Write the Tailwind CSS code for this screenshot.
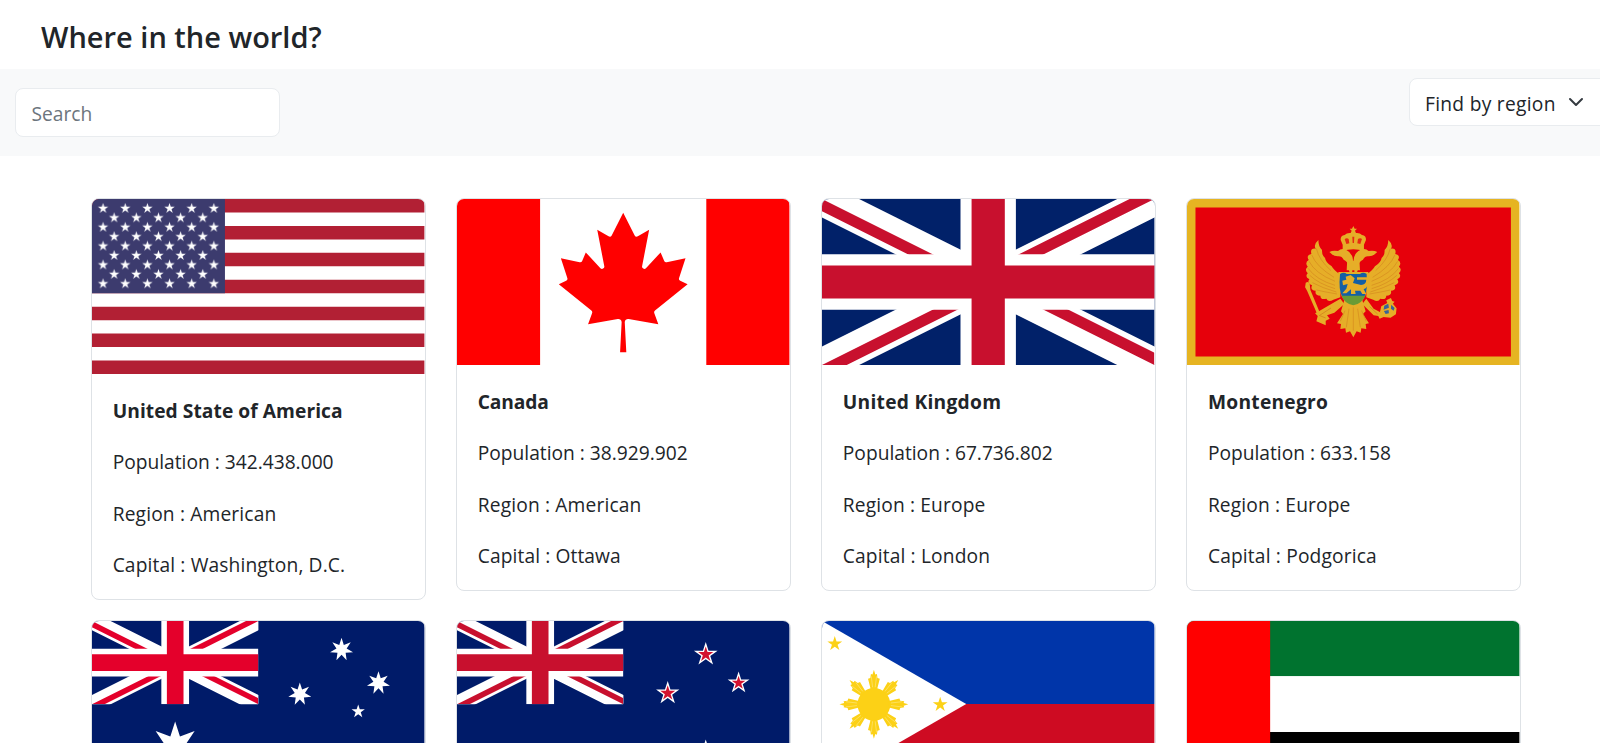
<!DOCTYPE html>
<html lang="en">
<head>
<meta charset="utf-8">
<title>Where in the world?</title>
<script src="https://cdn.jsdelivr.net/npm/@tailwindcss/browser@4"></script>
</head>
<body class="h-[743px] overflow-hidden bg-white font-['Open_Sans','Noto_Sans',sans-serif] text-[19.2px] leading-[30.72px] text-[#212529]">

<svg class="hidden" aria-hidden="true">
  <defs>
    <symbol id="star5" viewBox="-1 -1 2 2" overflow="visible"><path d="M0-1 .225-.309 .951-.309 .363.118 .588.809 0 .382-.588.809-.363.118-.951-.309-.225-.309z"/></symbol>
    <symbol id="star7" viewBox="-1 -1 2 2" overflow="visible"><path d="M0-1 .193-.4 .782-.623 .433-.099 .975.223 .347.277 .434.901 0 .444-.434.901-.347.277-.975.223-.433-.099-.782-.623-.193-.4z"/></symbol>
  </defs>
</svg>

<header class="flex h-[69px] items-center pl-[41px]">
  <h1 class="pt-[4px] text-[29px] font-semibold leading-9">Where in the world?</h1>
</header>

<div class="flex h-[87px] items-start justify-between bg-[#f8f9fa]">
  <div class="mt-[19px] ml-[15px] flex h-[49px] w-[265px] items-center rounded-[8px] border border-[#e9ecef] bg-white pl-[15.5px] pt-[4px] text-[#6c757d]">Search</div>
  <div class="-mr-2 mt-[9px] flex h-[48px] w-[199px] items-center rounded-[8px] border border-[#e9ecef] bg-white pl-[15px] pt-[4px]">
    <span class="w-[143px] whitespace-nowrap tracking-[0.28px]">Find by region</span>
    <svg class="-mt-1 h-[16px] w-[16px]" viewBox="0 0 16 16" fill="none" stroke="#343a40" stroke-width="2" stroke-linecap="round" stroke-linejoin="round"><path d="m2 5 6 6 6-6"/></svg>
  </div>
</div>

<main class="grid grid-cols-[repeat(4,334.4px)] items-start gap-x-[30.7px] gap-y-[20px] pl-[91.2px] pt-[42px]">

  <article class="overflow-hidden rounded-[8px] border border-[#dee2e6]">
    <svg class="block h-[175px] w-full" viewBox="0 0 7410 3900" preserveAspectRatio="none">
      <defs>
        <pattern id="sA" width="494" height="420" patternUnits="userSpaceOnUse"><use href="#star5" x="127" y="90" width="240" height="240" fill="#fff"/></pattern>
        <pattern id="sB" x="247" y="210" width="494" height="420" patternUnits="userSpaceOnUse"><use href="#star5" x="127" y="90" width="240" height="240" fill="#fff"/></pattern>
      </defs>
      <path fill="#fff" d="M0 0h7410v3900H0z"/>
      <path stroke="#b22034" stroke-width="300" d="M0 150h7410M0 750h7410M0 1350h7410M0 1950h7410M0 2550h7410M0 3150h7410M0 3750h7410"/>
      <path fill="#3c3b6e" d="M0 0h2964v2100H0z"/>
      <path fill="url(#sA)" d="M0 0h2964v2100H0z"/>
      <path fill="url(#sB)" d="M247 210h2470v1680H247z"/>
    </svg>
    <div class="flex flex-col gap-[20.48px] px-[20.48px] pt-[22.2px] pb-[18.8px]">
      <h2 class="font-bold tracking-[0.06px]">United State of America</h2>
      <p>Population : 342.438.000</p><p class="tracking-[0.15px]">Region : American</p><p class="tracking-[0.13px]">Capital : Washington, D.C.</p>
    </div>
  </article>

  <article class="overflow-hidden rounded-[8px] border border-[#dee2e6]">
    <svg class="block h-[166px] w-full" viewBox="-4800 -2400 9600 4800" preserveAspectRatio="none">
      <path fill="#fff" d="M-4800-2400h9600v4800h-9600z"/>
      <path fill="red" d="M-4800-2400h2400v4800h-2400zM2400-2400h2400v4800H2400zM-90 2030l45-863a95 95 0 0 0-111-98l-859 151 116-320a65 65 0 0 0-20-73l-941-762 212-99a65 65 0 0 0 34-79l-186-572 542 115a65 65 0 0 0 73-38l105-247 423 454a65 65 0 0 0 111-57l-204-1052 327 189a65 65 0 0 0 91-27l332-652 332 652a65 65 0 0 0 91 27l327-189-204 1052a65 65 0 0 0 111 57l423-454 105 247a65 65 0 0 0 73 38l542-115-186 572a65 65 0 0 0 34 79l212 99-941 762a65 65 0 0 0-20 73l116 320-859-151a95 95 0 0 0-111 98l45 863z"/>
    </svg>
    <div class="flex flex-col gap-[20.48px] px-[20.48px] pt-[22.2px] pb-[18.8px]">
      <h2 class="font-bold tracking-[-0.15px]">Canada</h2>
      <p>Population : 38.929.902</p><p class="tracking-[0.15px]">Region : American</p><p class="tracking-[0.1px]">Capital : Ottawa</p>
    </div>
  </article>

  <article class="overflow-hidden rounded-[8px] border border-[#dee2e6]">
    <svg class="block h-[166px] w-full" viewBox="0 0 60 30" preserveAspectRatio="none">
      <clipPath id="uk"><path d="M30 15h30v15zv15H0zH0V0zV0h30z"/></clipPath>
      <path fill="#012169" d="M0 0h60v30H0z"/>
      <path stroke="#fff" stroke-width="6" d="m0 0 60 30M60 0 0 30"/>
      <path stroke="#c8102e" stroke-width="4" clip-path="url(#uk)" d="m0 0 60 30M60 0 0 30"/>
      <path stroke="#fff" stroke-width="10" d="M30 0v30M0 15h60"/>
      <path stroke="#c8102e" stroke-width="6" d="M30 0v30M0 15h60"/>
    </svg>
    <div class="flex flex-col gap-[20.48px] px-[20.48px] pt-[22.2px] pb-[18.8px]">
      <h2 class="font-bold tracking-[0.27px]">United Kingdom</h2>
      <p>Population : 67.736.802</p><p class="tracking-[0.14px]">Region : Europe</p><p class="tracking-[0.14px]">Capital : London</p>
    </div>
  </article>

  <article class="overflow-hidden rounded-[8px] border border-[#dee2e6]">
    <svg class="block h-[166px] w-full" viewBox="0 0 333 166" preserveAspectRatio="none">
      <path fill="#e6b422" d="M0 0h333v166H0z"/>
      <path fill="#e6000b" d="M8.5 8.5h316v149h-316z"/>
      <g transform="translate(92.3 11) scale(.3333)" fill="#e6ae28">
        <g id="wing">
          <path d="M118 90Q102 104 110 116Q92 114 97 132Q80 136 89 150Q76 158 86 170Q75 178 86 190Q76 200 91 208Q82 220 99 226Q92 240 110 242Q106 257 124 257Q124 271 142 266Q148 278 163 269L184 262L182 192Q165 182 158 169Q140 158 138 144Q128 136 129 120Q118 110 118 90z"/>
          <path d="M219 196Q207 184 209 168Q205 153 194 149Q188 137 176 139Q163 139 151 126Q161 120 177 123Q188 113 202 120Q220 128 222 150Z"/>
          <path fill="none" stroke="#d68c20" stroke-width="2.2" d="M112 116Q120 150 156 182M98 135Q112 170 165 202M90 154Q108 190 168 214M87 175Q112 210 168 226M92 196Q120 222 168 236M100 218Q130 234 172 246M112 240Q138 246 174 252"/>
        </g>
        <use href="#wing" transform="matrix(-1 0 0 1 446 0)"/>
        <path d="M223 48l4 8h7l-6 6 3 7q12-1 18 6 13 2 12 15l-6 14v18q-32-9-64 0v-18l-6-14q-1-13 12-15 6-7 18-6l3-7-6-6h7z"/>
        <path fill="#e6000b" opacity=".75" d="M197 87q7-5 12 0l2 13-9 2zM237 87q7-5 12 0l-5 15-9-2zM220 80h6l-1 19h-4z"/>
        <path d="M205 145q18 14 36 0l2 36h-40zM196 270h54l10 34-8 8 18 28-10 2 2 15-15-2-2 13-12-4-10 18-10-18-12 4-2-13-15 2 2-15-12-2 18-28-6-8z"/>
        <path fill="none" stroke="#d68c20" stroke-width="2.2" d="M223 292v70M210 296l-8 56M236 296l8 56M198 302l-14 32M248 302l14 32"/>
        <path d="M184 266l12 16-30 26-22 8 8 10-12 6v14l-14-6-14-6 4-16-8-8 14-8 18-10zM262 266l-12 16 34 34 14 2 4 8 14-6-6-10-26-14z"/>
        <path d="M80 218q8-6 12 4l2 18 30 72-8 4-32-74-6-10z"/>
        <path fill="none" stroke="#d68c20" stroke-width="3" d="M156 294l-34 22M272 290l24 22M120 316l20 8"/>
        <path d="M336 264l4 9 7 2-5 6 11 14-2 18-16 10-22-2-10-14 4-18 18-10-3-8z"/>
        <path fill="#38639a" d="M316 287l12-6 2 12-16 6zM337 284l10 10-3 8-8-6zM315 303l14-3 1 10-10 2z"/>
        <path d="M178 186h90q6 86-45 104-51-18-45-104z"/>
        <path fill="#155fa5" d="M183 192q12-8 20 0h40q10-8 20 0 4 50-7 69h-66q-12-19-7-69z"/>
        <path fill="#699b35" d="M187 257h72q-10 24-36 29-26-5-36-29z"/>
        <path d="M200 200l15-5 12 10-5 14 24 6q16-2 16-16h-28v-7h34q4 30-14 36l8 14h-12l-6-10h-16l2 10h-14v-14l-14 12h-12l12-14 4-14-14 4-2-14 12-3z"/>
        <path stroke="#155fa5" stroke-width="3" d="M232 217h22"/>
      </g>
    </svg>
    <div class="flex flex-col gap-[20.48px] px-[20.48px] pt-[22.2px] pb-[18.8px]">
      <h2 class="font-bold tracking-[0.27px]">Montenegro</h2>
      <p>Population : 633.158</p><p class="tracking-[0.14px]">Region : Europe</p><p class="tracking-[0.16px]">Capital : Podgorica</p>
    </div>
  </article>

  <article class="overflow-hidden rounded-[8px] border border-[#dee2e6]">
    <svg class="block h-[166px] w-full" viewBox="0 0 333 166" preserveAspectRatio="none">
      <path fill="#001b69" d="M0 0h333v166H0z"/>
      <svg width="166.7" height="83.3" viewBox="0 0 60 30" preserveAspectRatio="none">
        <path stroke="#fff" stroke-width="6" d="m0 0 60 30M60 0 0 30"/>
        <path stroke="#e4002b" stroke-width="4" clip-path="url(#uk)" d="m0 0 60 30M60 0 0 30"/>
        <path stroke="#fff" stroke-width="10" d="M30 0v30M0 15h60"/>
        <path stroke="#e4002b" stroke-width="6" d="M30 0v30M0 15h60"/>
      </svg>
      <g fill="#fff">
        <use href="#star7" x="238.2" y="16.8" width="23.6" height="23.6"/>
        <use href="#star7" x="275.2" y="50.2" width="23.6" height="23.6"/>
        <use href="#star7" x="196.4" y="61.4" width="23.6" height="23.6"/>
        <use href="#star5" x="259.7" y="83.5" width="14" height="14"/>
        <use href="#star7" x="58.3" y="100.5" width="50" height="50"/>
      </g>
    </svg>
  </article>

  <article class="overflow-hidden rounded-[8px] border border-[#dee2e6]">
    <svg class="block h-[166px] w-full" viewBox="0 0 333 166" preserveAspectRatio="none">
      <path fill="#001b69" d="M0 0h333v166H0z"/>
      <svg width="166.7" height="83.3" viewBox="0 0 60 30" preserveAspectRatio="none">
        <path stroke="#fff" stroke-width="6" d="m0 0 60 30M60 0 0 30"/>
        <path stroke="#c8102e" stroke-width="4" clip-path="url(#uk)" d="m0 0 60 30M60 0 0 30"/>
        <path stroke="#fff" stroke-width="10" d="M30 0v30M0 15h60"/>
        <path stroke="#c8102e" stroke-width="6" d="M30 0v30M0 15h60"/>
      </svg>
      <g fill="#fff">
        <use href="#star5" x="236.7" y="21" width="25" height="25"/>
        <use href="#star5" x="270.6" y="50.5" width="23" height="23"/>
        <use href="#star5" x="198.8" y="59.9" width="24.6" height="24.6"/>
        <use href="#star5" x="235.2" y="118.5" width="28" height="28"/>
      </g>
      <g fill="#d3122f">
        <use href="#star5" x="241.2" y="25.5" width="16" height="16"/>
        <use href="#star5" x="274.9" y="54.8" width="14.4" height="14.4"/>
        <use href="#star5" x="203.2" y="64.3" width="15.8" height="15.8"/>
        <use href="#star5" x="240.2" y="123.5" width="18" height="18"/>
      </g>
    </svg>
  </article>

  <article class="overflow-hidden rounded-[8px] border border-[#dee2e6]">
    <svg class="block h-[166px] w-full" viewBox="0 0 333 166" preserveAspectRatio="none">
      <path fill="#0035a9" d="M0 0h333v83H0z"/>
      <path fill="#ce0b22" d="M0 83h333v83H0z"/>
      <path fill="#fff" d="M0 0l144.5 83L0 166z"/>
      <g fill="#fcd116">
        <use href="#star5" x="5" y="15" width="15.6" height="15.6"/>
        <use href="#star5" x="110.6" y="75.8" width="15.6" height="15.6"/>
        <use href="#star5" x="5" y="136" width="15.6" height="15.6"/>
        <g transform="translate(52 83.3)">
          <circle r="16.4"/>
          <g id="ray2"><g id="ray"><path d="M-3.2-15L-5.9-25.6-3.6-26.4-3-30.4-1.4-29.8 0-34.5 1.4-29.8 3-30.4 3.6-26.4 5.9-25.6 3.2-15z"/><path stroke="#fff" stroke-width=".6" opacity=".5" d="M-1.3-17L-2.6-28M1.3-17L2.6-28"/></g>
          <use href="#ray" transform="rotate(90)"/><use href="#ray" transform="rotate(180)"/><use href="#ray" transform="rotate(270)"/></g>
          <use href="#ray2" transform="rotate(45)"/>
        </g>
      </g>
    </svg>
  </article>

  <article class="overflow-hidden rounded-[8px] border border-[#dee2e6]">
    <svg class="block h-[166px] w-full" viewBox="0 0 333 166" preserveAspectRatio="none">
      <path fill="#00732f" d="M0 0h333v55.3H0z"/>
      <path fill="#fff" d="M0 55.3h333v55.6H0z"/>
      <path d="M0 110.9h333V166H0z"/>
      <path fill="red" d="M0 0h83.3v166H0z"/>
    </svg>
  </article>
</main>
</body>
</html>
